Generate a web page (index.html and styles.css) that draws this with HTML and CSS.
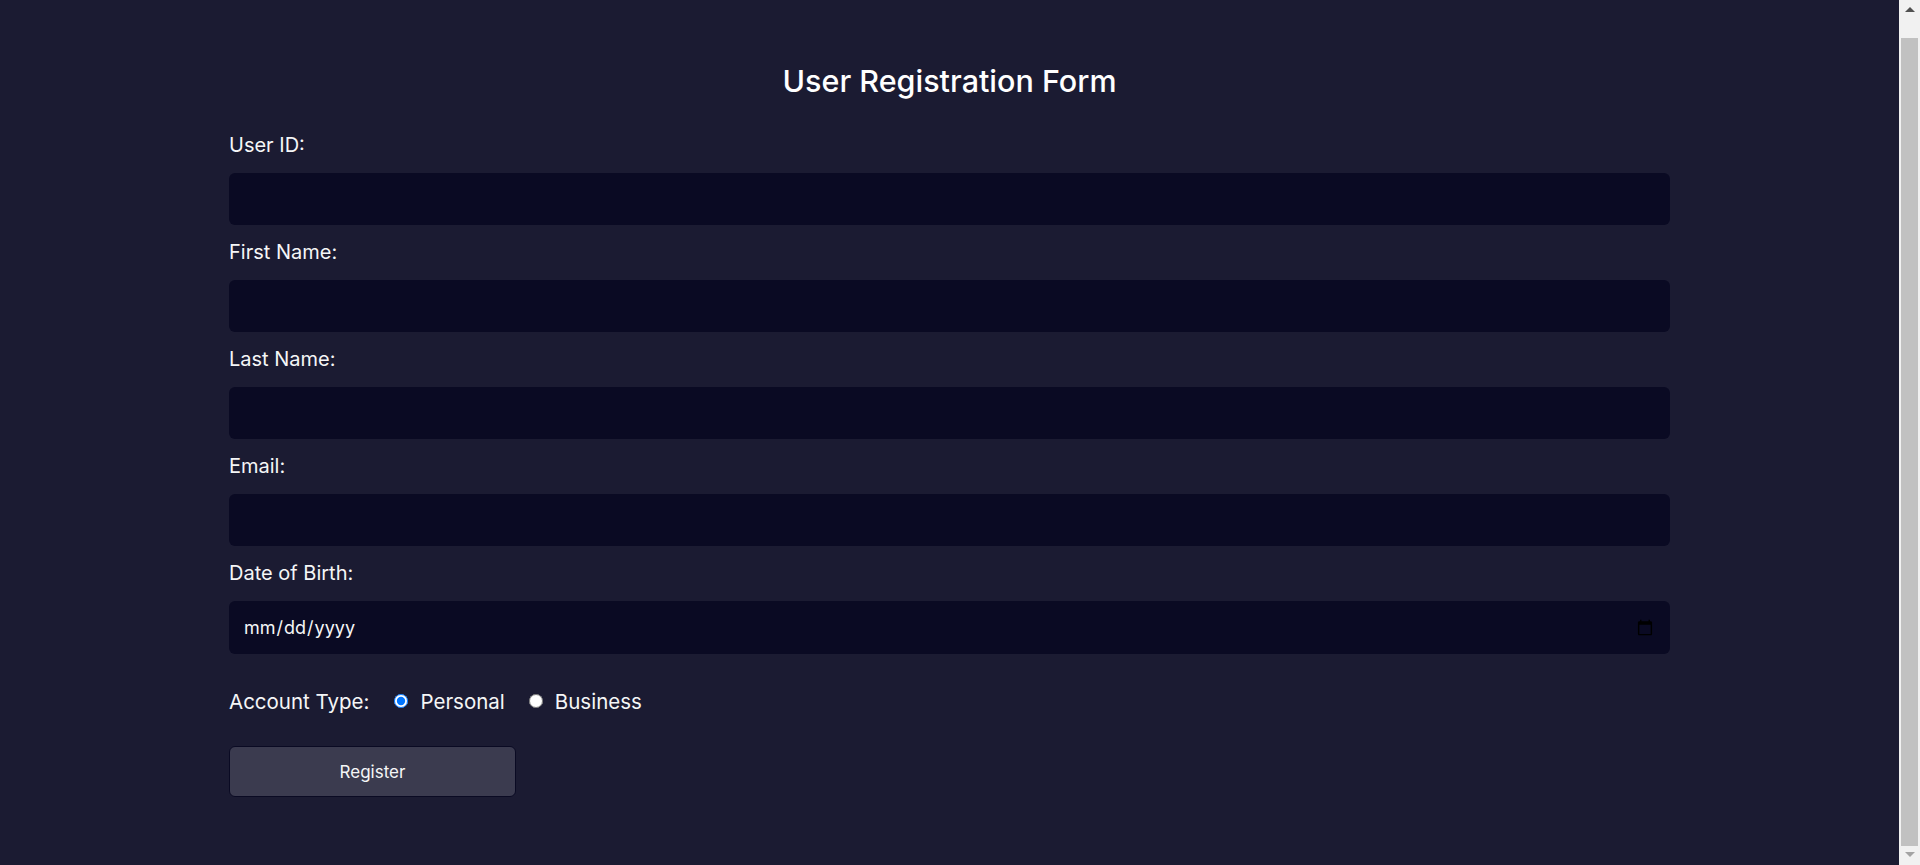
FILE: index.html
```html
<!DOCTYPE html>
<html lang="en">
<head>
<meta charset="utf-8">
<title>User Registration Form</title>
<link rel="stylesheet" href="styles.css">
</head>
<body>
<main class="container">
  <h1 class="title">User Registration Form</h1>
  <form class="form">
    <div class="field">
      <label class="label" for="uid">User ID:</label>
      <input class="input" id="uid" type="text">
    </div>
    <div class="field">
      <label class="label" for="fname">First Name:</label>
      <input class="input" id="fname" type="text">
    </div>
    <div class="field">
      <label class="label" for="lname">Last Name:</label>
      <input class="input" id="lname" type="text">
    </div>
    <div class="field">
      <label class="label" for="email">Email:</label>
      <input class="input" id="email" type="email">
    </div>
    <div class="field">
      <label class="label" for="dob">Date of Birth:</label>
      <input class="input input-date" id="dob" type="date">
    </div>
    <div class="account">
      <span class="account-label">Account Type:</span>
      <label class="radio"><input type="radio" name="type" checked><span>Personal</span></label>
      <label class="radio"><input type="radio" name="type"><span>Business</span></label>
    </div>
    <button class="btn" type="button">Register</button>
  </form>
</main>
<div class="scrollbar" aria-hidden="true">
  <div class="scroll-arrow scroll-up"></div>
  <div class="scroll-thumb"></div>
  <div class="scroll-arrow scroll-down"></div>
</div>
</body>
</html>
```

FILE: styles.css
```css
html, body {
  margin: 0;
  padding: 0;
}

body {
  background: #1b1b32;
  color: #f5f6f7;
  font-family: "Inter", "Open Sans", sans-serif;
  padding-right: 21px;
}

.container {
  width: 1441px;
  margin: 0 auto;
  padding: 62px 0 93px;
}

.title {
  margin: 0 0 31px;
  font-size: 30.5px;
  font-weight: 500;
  line-height: 38px;
  text-align: center;
  color: #ffffff;
}

.form {
  display: flex;
  flex-direction: column;
}

.field {
  display: flex;
  flex-direction: column;
  margin-bottom: 13px;
}

.label {
  font-size: 20px;
  line-height: 28px;
  margin-bottom: 14px;
}

.input {
  box-sizing: border-box;
  width: 100%;
  height: 52px;
  background: #0a0a23;
  border: none;
  border-radius: 6px;
  color: #f5f6f7;
  font-family: inherit;
  font-size: 18px;
  padding: 0 14px;
  outline: none;
}

.input-date {
  height: 53px;
}

.account {
  display: flex;
  align-items: center;
  height: 30px;
  margin-top: 19px;
  font-size: 20.5px;
}

.account-label {
  margin-right: 25px;
}

.radio {
  display: flex;
  align-items: center;
  margin-right: 24px;
}

.radio input {
  width: 14px;
  height: 14px;
  margin: 0 12px 0 0;
}

.btn {
  box-sizing: border-box;
  width: 287px;
  height: 51px;
  margin-top: 30px;
  background: #3b3b4f;
  border: 1px solid #0a0a23;
  border-radius: 6px;
  color: #f5f6f7;
  font-family: inherit;
  font-size: 17px;
  cursor: pointer;
}

.scrollbar {
  position: fixed;
  top: 0;
  right: 0;
  bottom: 0;
  width: 21px;
  background: #f1f1f1;
  display: flex;
  flex-direction: column;
  align-items: center;
}

.scroll-arrow {
  width: 0;
  height: 0;
  border-left: 5px solid transparent;
  border-right: 5px solid transparent;
}

.scroll-up {
  margin-top: 7px;
  border-bottom: 5px solid #505050;
}

.scroll-down {
  margin-bottom: 8px;
  border-top: 5px solid #a3a3a3;
}

.scroll-thumb {
  width: 17px;
  margin: 26px 0 6px;
  flex: 1;
  background: #c1c1c1;
}
```
